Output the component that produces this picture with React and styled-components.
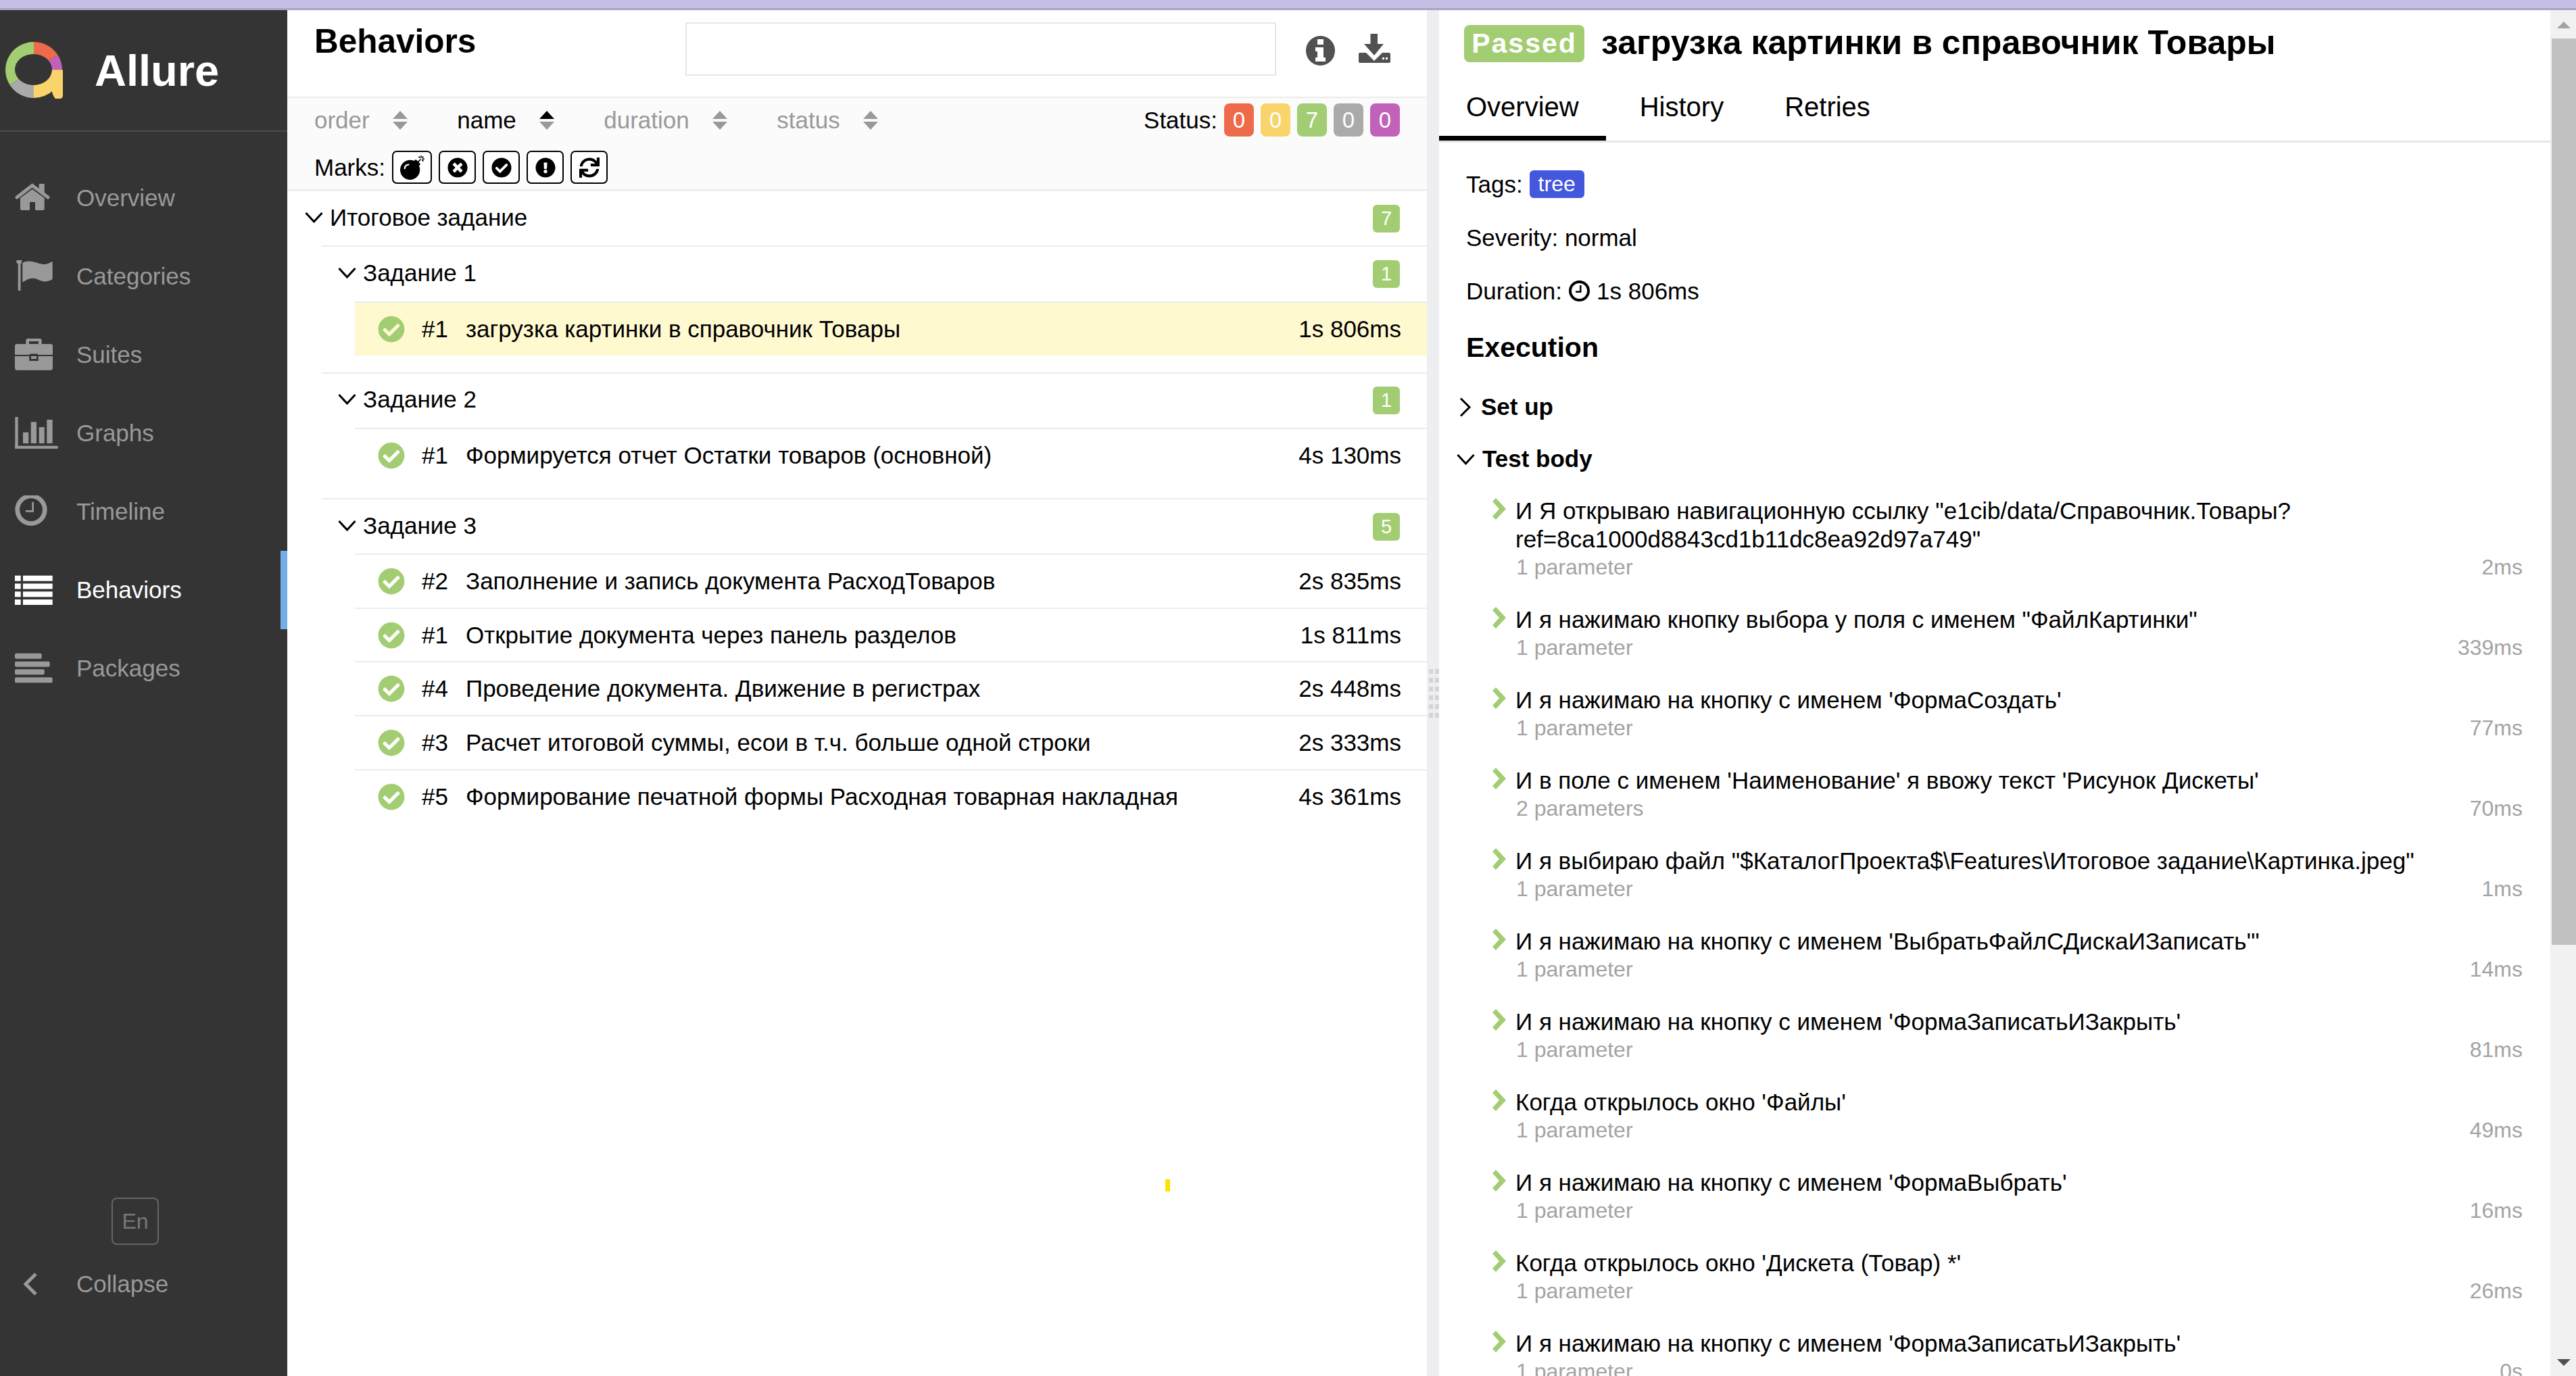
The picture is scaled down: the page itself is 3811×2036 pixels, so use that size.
import styled, { createGlobalStyle } from "styled-components";
import { FaBomb, FaTimesCircle, FaCheckCircle, FaExclamationCircle, FaSync } from "react-icons/fa";

const GREEN = "#a3cd72";

const GlobalStyle = createGlobalStyle`
  html, body {
    margin: 0;
    padding: 0;
    height: 100%;
    overflow: hidden;
    background: #fff;
  }
  * { box-sizing: border-box; }
  body {
    font-family: "Liberation Sans", Arial, sans-serif;
    font-size: 35px;
    color: #000;
  }
`;

const Page = styled.div`
  width: 3811px;
  height: 2036px;
  display: flex;
  flex-direction: column;
  overflow: hidden;
`;

const TopBar = styled.div`
  height: 15px;
  flex: none;
  background: #c5bfe3;
  border-bottom: 3px solid #a9a5c3;
`;

const Main = styled.div`
  flex: 1;
  min-height: 0;
  display: flex;
`;

/* sidebar */
const Sidebar = styled.aside`
  width: 425px;
  flex: none;
  background: #343434;
  display: flex;
  flex-direction: column;
  padding-bottom: 78px;
`;

const Brand = styled.div`
  height: 180px;
  flex: none;
  display: flex;
  align-items: center;
  padding: 0 0 0 8px;
  border-bottom: 2px solid #4c4c4c;
`;

const BrandName = styled.div`
  margin-left: 47px;
  font-size: 65px;
  font-weight: 700;
  color: #fff;
`;

const Nav = styled.nav`
  margin-top: 40px;
`;

const NavItem = styled.div`
  height: 116px;
  display: flex;
  align-items: center;
  color: ${(p) => (p.$active ? "#fff" : "#999")};
  border-right: 10px solid ${(p) => (p.$active ? "#74aeea" : "transparent")};
`;

const NavIcon = styled.svg`
  width: 64px;
  height: 48px;
  margin-left: 22px;
  margin-right: 27px;
  flex: none;
  fill: currentColor;
`;

const SideFooter = styled.div`
  margin-top: auto;
  display: flex;
  flex-direction: column;
`;

const LangButton = styled.div`
  width: 70px;
  height: 70px;
  margin-left: 165px;
  border: 2px solid #666;
  border-radius: 8px;
  color: #777;
  font-size: 32px;
  display: flex;
  align-items: center;
  justify-content: center;
`;

const CollapseRow = styled.div`
  height: 116px;
  display: flex;
  align-items: center;
  color: #999;
`;

const CollapseIcon = styled.svg`
  width: 24px;
  height: 34px;
  margin-left: 33px;
  margin-right: 56px;
  fill: none;
  stroke: #999;
  stroke-width: 5;
`;

/* list pane */
const ListPane = styled.section`
  width: 1686px;
  flex: none;
  position: relative;
  display: flex;
  flex-direction: column;
`;

const ListHeader = styled.header`
  height: 130px;
  flex: none;
  display: flex;
  align-items: flex-start;
  border-bottom: 2px solid #ececec;
`;

const PaneTitle = styled.h2`
  margin: 18px 0 0 40px;
  width: 549px;
  font-size: 49.5px;
  font-weight: 700;
  line-height: 56px;
`;

const SearchBox = styled.div`
  width: 874px;
  height: 79px;
  margin-top: 18px;
  border: 2px solid #e6e6e6;
  background: #fff;
`;

const HeaderIcon = styled.svg`
  flex: none;
  fill: #515151;
  margin: ${(p) => p.$margin};
`;

const Toolbar = styled.div`
  height: 138px;
  flex: none;
  background: #fbfbfb;
  border-bottom: 3px solid #efefef;
  padding: 0 40px;
`;

const SortRow = styled.div`
  height: 65px;
  display: flex;
  align-items: center;
`;

const SortItem = styled.div`
  display: flex;
  align-items: center;
  gap: 34px;
  margin-right: 73.5px;
  color: ${(p) => (p.$active ? "#000" : "#999")};
`;

const SortArrows = styled.svg`
  width: 22px;
  height: 28px;
  flex: none;
`;

const StatusFilter = styled.div`
  margin-left: auto;
  display: flex;
  align-items: center;
  gap: 10px;
`;

const StatusBadge = styled.span`
  width: 44px;
  height: 49px;
  border-radius: 8px;
  background: ${(p) => p.$color};
  color: #fff;
  font-size: 33px;
  display: flex;
  align-items: center;
  justify-content: center;
`;

const MarksRow = styled.div`
  margin-top: 13px;
  height: 49px;
  display: flex;
  align-items: center;
  gap: 10px;
`;

const MarkButton = styled.span`
  width: ${(p) => p.$w || 55}px;
  height: 49px;
  border: 2px solid #000;
  border-radius: 7px;
  background: #fff;
  display: flex;
  align-items: center;
  justify-content: center;
  font-size: ${(p) => p.$size || 30}px;
`;

const TreeGroupHead = styled.div`
  height: ${(p) => p.$h}px;
  display: flex;
  align-items: center;
  padding: 0 40px 4px ${(p) => p.$pad}px;
  margin-left: ${(p) => p.$indent || 0}px;
  border-top: ${(p) => (p.$line ? "2px solid #ececec" : "none")};
`;

const Chevron = styled.svg`
  flex: none;
  fill: none;
  stroke: #000;
  stroke-width: 3;
`;

const GroupName = styled.span`
  margin-left: ${(p) => p.$gap}px;
  margin-top: 1px;
`;

const CountBadge = styled.span`
  margin-left: auto;
  margin-top: 4px;
  width: 40px;
  height: 41px;
  border-radius: 6px;
  background: ${GREEN};
  color: #fff;
  font-size: 29px;
  display: flex;
  align-items: center;
  justify-content: center;
`;

const SubGroup = styled.div`
  margin-bottom: 24.5px;
`;

const TestRow = styled.div`
  height: ${(p) => p.$h || 79.7}px;
  margin-left: 100px;
  display: flex;
  align-items: center;
  padding: 0 38px 0 34px;
  border-top: 2px solid #ececec;
  background: ${(p) => (p.$selected ? "#fff9d0" : "#fff")};
`;

const TestOrder = styled.span`
  width: 65px;
  margin-left: 25px;
  flex: none;
`;

const TestDuration = styled.span`
  margin-left: auto;
`;

const StrayMark = styled.div`
  position: absolute;
  left: 1299px;
  top: 1730px;
  width: 7px;
  height: 18px;
  background: #ffe000;
`;

/* splitter */
const Gutter = styled.div`
  width: 18px;
  flex: none;
  background: #edeef0;
  display: flex;
  align-items: center;
  justify-content: center;
`;

const GripDots = styled.div`
  display: grid;
  grid-template-columns: 6px 6px;
  grid-auto-rows: 7px;
  column-gap: 3px;
  row-gap: 6px;
  margin-left: 3px;
`;

const GripDot = styled.span`
  background: #d4d4d6;
`;

/* detail pane */
const DetailPane = styled.section`
  flex: 1;
  min-width: 0;
  overflow: hidden;
  display: flex;
  flex-direction: column;
`;

const DetailTitle = styled.div`
  display: flex;
  align-items: center;
  margin: 22px 0 0 37px;
  height: 55px;
  flex: none;
`;

const PassedBadge = styled.span`
  width: 178px;
  height: 55px;
  border-radius: 8px;
  background: ${GREEN};
  color: #fff;
  font-size: 41px;
  font-weight: 700;
  letter-spacing: 2px;
  display: flex;
  align-items: center;
  justify-content: center;
`;

const TestTitle = styled.h1`
  margin: -3px 0 0 25px;
  font-size: 50px;
  font-weight: 700;
  white-space: nowrap;
`;

const Tabs = styled.div`
  margin-top: 23px;
  flex: none;
  display: flex;
  gap: 10px;
  border-bottom: 3px solid #e6e6e6;
`;

const Tab = styled.div`
  height: 93px;
  padding: 0 40px;
  font-size: 40px;
  display: flex;
  align-items: center;
  border-bottom: 7px solid ${(p) => (p.$active ? "#000" : "transparent")};
`;

const DetailBody = styled.div`
  padding: 22px 41px 0 40px;
`;

const InfoLine = styled.div`
  height: 79px;
  display: flex;
  align-items: center;
  gap: 10px;
`;

const TagBadge = styled.span`
  width: 81px;
  height: 41px;
  border-radius: 6px;
  background: #4358dd;
  color: #fff;
  font-size: 32px;
  display: flex;
  align-items: center;
  justify-content: center;
`;

const ClockIcon = styled.svg`
  width: 31px;
  height: 31px;
  flex: none;
`;

const SectionTitle = styled.h3`
  margin: 19px 0 0;
  font-size: 41px;
  font-weight: 700;
  line-height: 50px;
`;

const StageHead = styled.div`
  margin: ${(p) => p.$top}px 0 0 ${(p) => p.$left}px;
  height: 50px;
  display: flex;
  align-items: center;
  font-weight: 700;
`;

const StageName = styled.span`
  margin-left: ${(p) => p.$gap}px;
`;

const StepList = styled.div`
  margin: 31px 0 0 38px;
  display: flex;
  flex-direction: column;
  gap: 36px;
`;

const Step = styled.div`
  display: flex;
  gap: 13px;
`;

const StepArrow = styled.svg`
  width: 22px;
  height: 32px;
  margin-top: 2px;
  flex: none;
  fill: ${GREEN};
`;

const StepBody = styled.div`
  flex: 1;
  min-width: 0;
`;

const StepText = styled.div`
  line-height: 42px;
`;

const StepMeta = styled.div`
  height: 41px;
  display: flex;
  align-items: center;
  justify-content: space-between;
  padding-left: 1px;
  font-size: 32px;
  color: #a3a3a3;
`;

/* scrollbar */
const ScrollTrack = styled.div`
  width: 38px;
  flex: none;
  background: #f1f1f1;
  display: flex;
  flex-direction: column;
  align-items: flex-end;
`;

const ScrollUp = styled.div`
  height: 42px;
  width: 36px;
  flex: none;
  display: flex;
  justify-content: center;
  padding-top: 17px;
  &::before {
    content: "";
    width: 0;
    height: 0;
    border-left: 10px solid transparent;
    border-right: 10px solid transparent;
    border-bottom: 10px solid #a3a3a3;
  }
`;

const ScrollThumb = styled.div`
  width: 36px;
  height: 1341px;
  flex: none;
  background: #c1c1c1;
`;

const ScrollDown = styled.div`
  margin-top: auto;
  width: 36px;
  height: 25px;
  flex: none;
  display: flex;
  justify-content: center;
  &::before {
    content: "";
    width: 0;
    height: 0;
    border-left: 10px solid transparent;
    border-right: 10px solid transparent;
    border-top: 10px solid #505050;
  }
`;

// logo wedge, angles clockwise from 12 o'clock
const wedge = (from, to) => {
  const pt = (a) => {
    const rad = (a * Math.PI) / 180;
    return `${42 + 42 * Math.sin(rad)} ${41.5 - 41.5 * Math.cos(rad)}`;
  };
  return `M42 41.5 L${pt(from)} A42 41.5 0 ${to - from > 180 ? 1 : 0} 1 ${pt(to)} Z`;
};

const Logo = () => (
  <svg width="85" height="84" viewBox="0 0 85 84">
    <path d={wedge(0, 58)} fill="#ed6a4b" />
    <path d={wedge(58, 90)} fill="#c261b9" />
    <path d={wedge(90, 180)} fill="#f9d46a" />
    <path d={wedge(180, 238)} fill="#aaaaaa" />
    <path d={wedge(238, 360)} fill="#a3cd72" />
    <path d="M68 41.5 H85 V79 Q85 84 80 84 H74 Q70 80 68 70 Z" fill="#f9d46a" />
    <ellipse cx="41.5" cy="41" rx="27.5" ry="23" fill="#343434" />
  </svg>
);

const HomeGlyph = () => (
  <NavIcon viewBox="22 268 64 48">
    <path d="M25 291 L47.7 273.5 L71 291" fill="none" stroke="currentColor" strokeWidth="5" strokeLinecap="round" />
    <rect x="57.7" y="271" width="8" height="13" />
    <path d="M30 292 L47.7 279 L65.7 292 V308 Q65.7 310 63.7 310 H52 V298 H44 V310 H32 Q30 310 30 308 Z" />
  </NavIcon>
);

const FlagGlyph = () => (
  <NavIcon viewBox="22 385 64 48">
    <circle cx="28.3" cy="386.7" r="4" />
    <rect x="26.7" y="388" width="3.8" height="42" />
    <path d="M33.3 389 C45 382 58 392 66 391 C70 391 75 388 77.7 386.7 V413 C70 418 62 417 55 413 C47 410 40 413 35 417 Q33.3 418 33.3 415 Z" />
  </NavIcon>
);

const CaseGlyph = () => (
  <NavIcon viewBox="22 495 64 48">
    <path fillRule="evenodd" d="M41 495 H59 Q61.7 495 61.7 498 V503 H57 V499 H43 V503 H38.3 V498 Q38.3 495 41 495 Z" />
    <path d="M25 503 H75 Q78 503 78 506 V519 H56 V517.5 H44 V519 H22 V506 Q22 503 25 503 Z" />
    <path d="M22 521 H43.3 V528 H56.7 V521 H78 V538 Q78 541.7 75 541.7 H25 Q22 541.7 22 538 Z" />
    <rect x="46" y="521" width="8" height="4" />
  </NavIcon>
);

const ChartGlyph = () => (
  <NavIcon viewBox="22 615 64 48">
    <rect x="22.3" y="615" width="4.4" height="47" />
    <rect x="22.3" y="657.7" width="63.4" height="4.2" />
    <rect x="34" y="637.7" width="8.3" height="16.3" />
    <rect x="45.7" y="622.3" width="8.3" height="31.7" />
    <rect x="57.7" y="630" width="8" height="24" />
    <rect x="69.3" y="619" width="8.4" height="35" />
  </NavIcon>
);

const ClockGlyph = () => (
  <NavIcon viewBox="22 733 64 48">
    <circle cx="46" cy="754.3" r="20.3" fill="none" stroke="currentColor" strokeWidth="6.7" />
    <path d="M47.3 742.7 H50 V757.7 H38 V755 H47.3 Z" />
  </NavIcon>
);

const ListGlyph = () => (
  <NavIcon viewBox="22 844 64 48">
    {[846.7, 858.5, 870.3, 882].map((y) => (
      <g key={y}>
        <rect x="22" y={y} width="8.7" height="8" />
        <rect x="34" y={y} width="43.7" height="8" />
      </g>
    ))}
  </NavIcon>
);

const PackagesGlyph = () => (
  <NavIcon viewBox="22 961 64 48">
    <rect x="22" y="962.7" width="39.7" height="8" rx="2" />
    <rect x="22" y="974.7" width="51.7" height="8" rx="2" />
    <rect x="22" y="986.3" width="43.7" height="8" rx="2" />
    <rect x="22" y="998.3" width="55.7" height="8" rx="2" />
  </NavIcon>
);

const navItems = [
  ["Overview", HomeGlyph],
  ["Categories", FlagGlyph],
  ["Suites", CaseGlyph],
  ["Graphs", ChartGlyph],
  ["Timeline", ClockGlyph],
  ["Behaviors", ListGlyph],
  ["Packages", PackagesGlyph],
];

const DownChevron = () => (
  <Chevron width="27" height="17" viewBox="0 0 27 17">
    <polyline points="1.5,2 13.5,15 25.5,2" />
  </Chevron>
);

const RightChevron = () => (
  <Chevron width="19" height="29" viewBox="0 0 19 29">
    <polyline points="3,1.5 16,14.5 3,27.5" />
  </Chevron>
);

const Sort = ({ label, active }) => (
  <SortItem $active={active}>
    <span>{label}</span>
    <SortArrows viewBox="0 0 22 28">
      <polygon points="11,0 22,12 0,12" fill={active ? "#000" : "#999"} />
      <polygon points="0,16 22,16 11,28" fill="#999" />
    </SortArrows>
  </SortItem>
);

const groups = [
  {
    name: "Задание 1",
    count: 1,
    head: 83,
    rows: [["#1", "загрузка картинки в справочник Товары", "1s 806ms", true]],
  },
  {
    name: "Задание 2",
    count: 1,
    head: 82,
    rows: [["#1", "Формируется отчет Остатки товаров (основной)", "4s 130ms"]],
  },
  {
    name: "Задание 3",
    count: 5,
    head: 82,
    rows: [
      ["#2", "Заполнение и запись документа РасходТоваров", "2s 835ms"],
      ["#1", "Открытие документа через панель разделов", "1s 811ms"],
      ["#4", "Проведение документа. Движение в регистрах", "2s 448ms"],
      ["#3", "Расчет итоговой суммы, есои в т.ч. больше одной строки", "2s 333ms"],
      ["#5", "Формирование печатной формы Расходная товарная накладная", "4s 361ms"],
    ],
  },
];

const steps = [
  [<>И Я открываю навигационную ссылку "e1cib/data/Справочник.Товары?<br />ref=8ca1000d8843cd1b11dc8ea92d97a749"</>, "1 parameter", "2ms"],
  [`И я нажимаю кнопку выбора у поля с именем "ФайлКартинки"`, "1 parameter", "339ms"],
  [`И я нажимаю на кнопку с именем 'ФормаСоздать'`, "1 parameter", "77ms"],
  [`И в поле с именем 'Наименование' я ввожу текст 'Рисунок Дискеты'`, "2 parameters", "70ms"],
  [`И я выбираю файл "$КаталогПроекта$\\Features\\Итоговое задание\\Картинка.jpeg"`, "1 parameter", "1ms"],
  [`И я нажимаю на кнопку с именем 'ВыбратьФайлСДискаИЗаписать'"`, "1 parameter", "14ms"],
  [`И я нажимаю на кнопку с именем 'ФормаЗаписатьИЗакрыть'`, "1 parameter", "81ms"],
  [`Когда открылось окно 'Файлы'`, "1 parameter", "49ms"],
  [`И я нажимаю на кнопку с именем 'ФормаВыбрать'`, "1 parameter", "16ms"],
  [`Когда открылось окно 'Дискета (Товар) *'`, "1 parameter", "26ms"],
  [`И я нажимаю на кнопку с именем 'ФормаЗаписатьИЗакрыть'`, "1 parameter", "0s"],
];

const App = () => {
  return (
    <Page>
      <GlobalStyle />
      <TopBar />
      <Main>
        <Sidebar>
          <Brand>
            <Logo />
            <BrandName>Allure</BrandName>
          </Brand>
          <Nav>
            {navItems.map(([label, Glyph]) => (
              <NavItem key={label} $active={label === "Behaviors"}>
                <Glyph />
                <span>{label}</span>
              </NavItem>
            ))}
          </Nav>
          <SideFooter>
            <LangButton>En</LangButton>
            <CollapseRow>
              <CollapseIcon viewBox="0 0 24 34">
                <polyline points="20,2 5,17 20,32" />
              </CollapseIcon>
              <span>Collapse</span>
            </CollapseRow>
          </SideFooter>
        </Sidebar>

        <ListPane>
          <ListHeader>
            <PaneTitle>Behaviors</PaneTitle>
            <SearchBox />
            <HeaderIcon width="43" height="44" viewBox="0 0 43 44" $margin="38px 0 0 44px">
              <ellipse cx="21.5" cy="22" rx="21.5" ry="22" />
              <path fill="#fff" d="M17 5 H26 V13 H17 Z M14 17 H26 V32 H29 V38 H14 V32 H17 V23 H14 Z" />
            </HeaderIcon>
            <HeaderIcon width="47" height="43" viewBox="0 0 47 43" $margin="35px 0 0 35px">
              <path d="M17.5 0 H28 V15 H37 L23 32 L8 15 H17.5 Z" />
              <path d="M2 28 H11 L23 40 L35 28 H45 Q47 28 47 30 V41 Q47 43 45 43 H2 Q0 43 0 41 V30 Q0 28 2 28 Z" />
              <rect x="35" y="35" width="3" height="3" fill="#fff" />
              <rect x="40" y="35" width="3" height="3" fill="#fff" />
            </HeaderIcon>
          </ListHeader>

          <Toolbar>
            <SortRow>
              <Sort label="order" />
              <Sort label="name" active />
              <Sort label="duration" />
              <Sort label="status" />
              <StatusFilter>
                <span>Status:</span>
                <StatusBadge $color="#ed6a4b">0</StatusBadge>
                <StatusBadge $color="#f9d46a">0</StatusBadge>
                <StatusBadge $color={GREEN}>7</StatusBadge>
                <StatusBadge $color="#aaaaaa">0</StatusBadge>
                <StatusBadge $color="#c261b9">0</StatusBadge>
              </StatusFilter>
            </SortRow>
            <MarksRow>
              <span>Marks:</span>
              <MarkButton $w={59} $size={36}><FaBomb /></MarkButton>
              <MarkButton><FaTimesCircle /></MarkButton>
              <MarkButton><FaCheckCircle /></MarkButton>
              <MarkButton><FaExclamationCircle /></MarkButton>
              <MarkButton><FaSync /></MarkButton>
            </MarksRow>
          </Toolbar>

          <TreeGroupHead $h={80} $pad={26}>
            <DownChevron />
            <GroupName $gap={10}>Итоговое задание</GroupName>
            <CountBadge>7</CountBadge>
          </TreeGroupHead>

          {groups.map((group) => (
            <SubGroup key={group.name}>
              <TreeGroupHead $h={group.head} $pad={24} $indent={51} $line>
                <DownChevron />
                <GroupName $gap={10}>{group.name}</GroupName>
                <CountBadge>{group.count}</CountBadge>
              </TreeGroupHead>
              {group.rows.map(([order, name, duration, selected]) => (
                <TestRow key={name} $selected={selected} $h={group.rows.length === 1 ? 80 : undefined}>
                  <FaCheckCircle size={40} color={GREEN} />
                  <TestOrder>{order}</TestOrder>
                  <span>{name}</span>
                  <TestDuration>{duration}</TestDuration>
                </TestRow>
              ))}
            </SubGroup>
          ))}

          <StrayMark />
        </ListPane>

        <Gutter>
          <GripDots>
            {Array.from({ length: 12 }, (_, i) => (
              <GripDot key={i} />
            ))}
          </GripDots>
        </Gutter>

        <DetailPane>
          <DetailTitle>
            <PassedBadge>Passed</PassedBadge>
            <TestTitle>загрузка картинки в справочник Товары</TestTitle>
          </DetailTitle>
          <Tabs>
            <Tab $active>Overview</Tab>
            <Tab>History</Tab>
            <Tab>Retries</Tab>
          </Tabs>
          <DetailBody>
            <InfoLine>
              <span>Tags:</span>
              <TagBadge>tree</TagBadge>
            </InfoLine>
            <InfoLine>Severity: normal</InfoLine>
            <InfoLine>
              <span>Duration:</span>
              <ClockIcon viewBox="0 0 31 31">
                <circle cx="15.5" cy="15.5" r="13.5" fill="none" stroke="#000" strokeWidth="4" />
                <path d="M16 7 H18.5 V18 H10 V15.5 H16 Z" fill="#000" />
              </ClockIcon>
              <span>1s 806ms</span>
            </InfoLine>
            <SectionTitle>Execution</SectionTitle>
            <StageHead $top={38} $left={-11}>
              <RightChevron />
              <StageName $gap={14}>Set up</StageName>
            </StageHead>
            <StageHead $top={27} $left={-14}>
              <DownChevron />
              <StageName $gap={11}>Test body</StageName>
            </StageHead>
            <StepList>
              {steps.map(([text, params, time], i) => (
                <Step key={i}>
                  <StepArrow viewBox="0 0 22 32">
                    <polygon points="1,5 6,0 21,16 6,32 1,27 11,16" />
                  </StepArrow>
                  <StepBody>
                    <StepText>{text}</StepText>
                    <StepMeta>
                      <span>{params}</span>
                      <span>{time}</span>
                    </StepMeta>
                  </StepBody>
                </Step>
              ))}
            </StepList>
          </DetailBody>
        </DetailPane>

        <ScrollTrack>
          <ScrollUp />
          <ScrollThumb />
          <ScrollDown />
        </ScrollTrack>
      </Main>
    </Page>
  );
};

export default App;
